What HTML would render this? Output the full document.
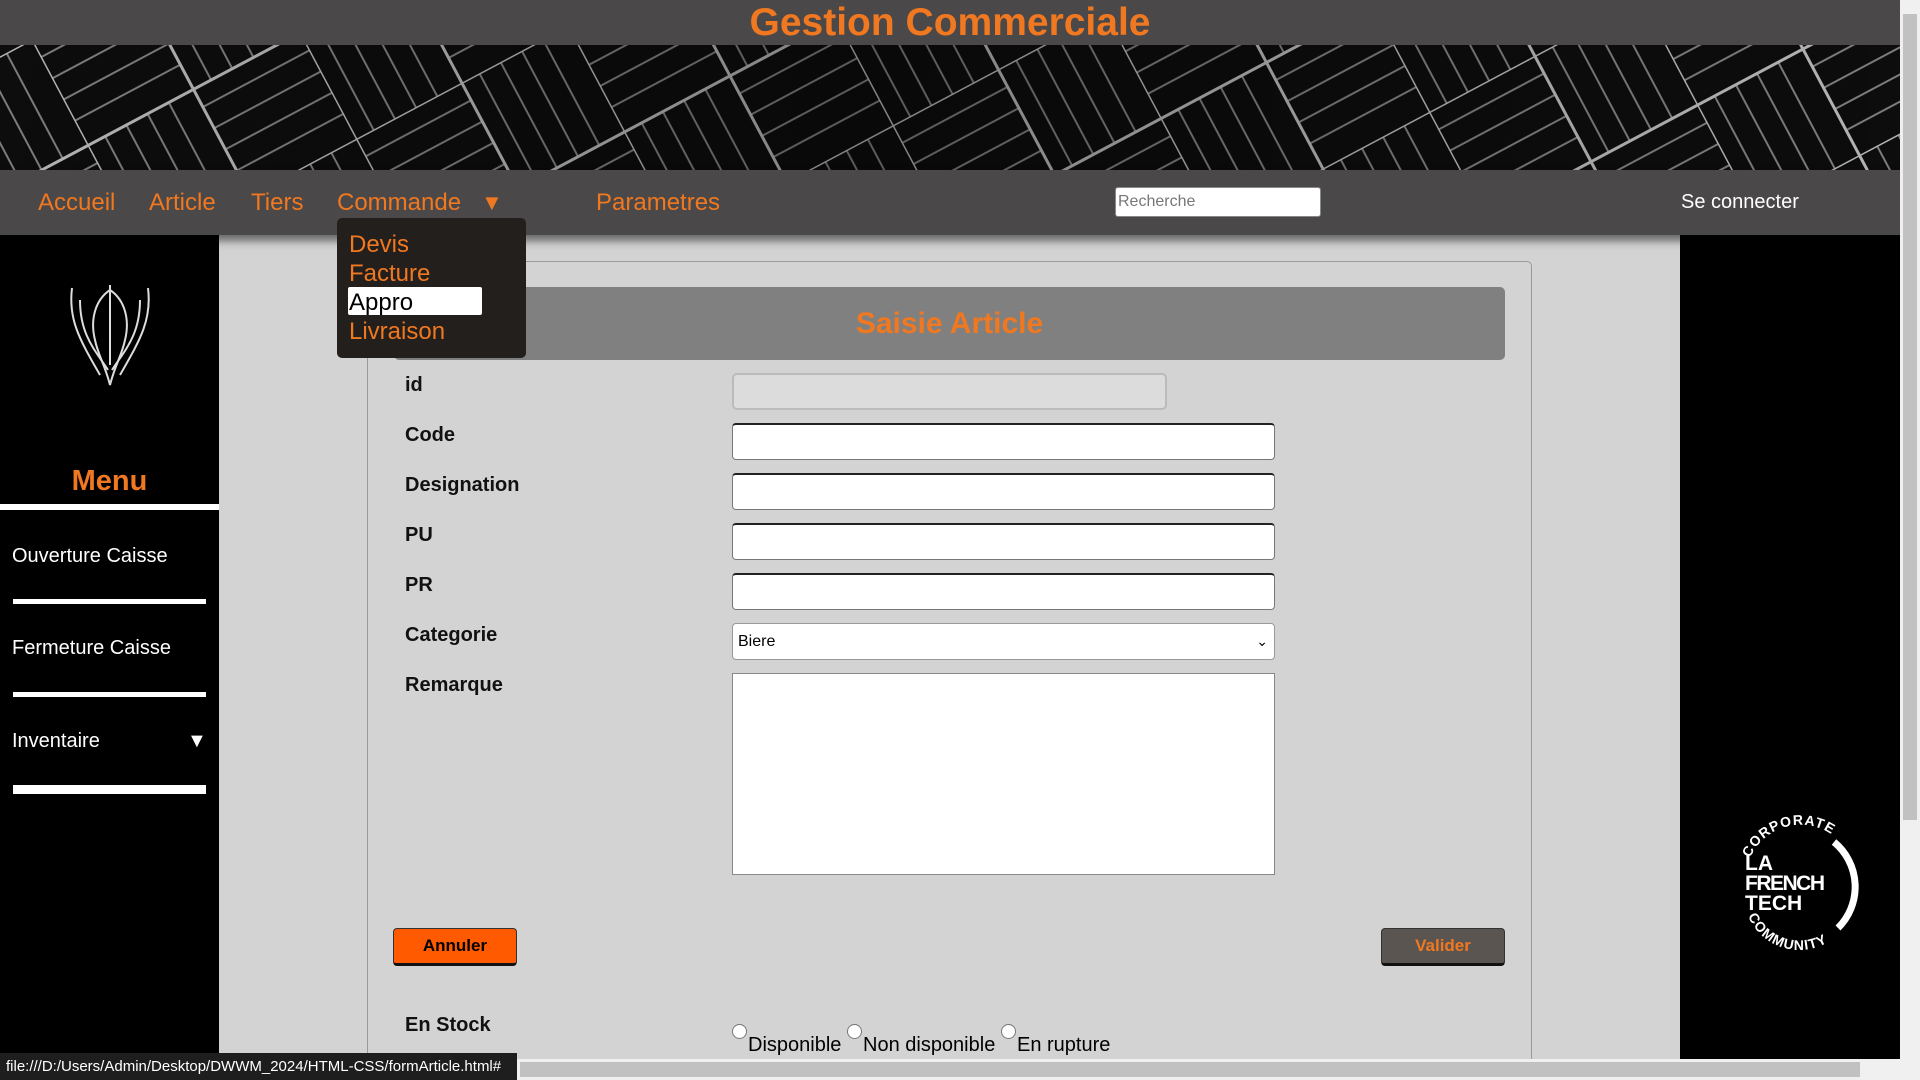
<!DOCTYPE html>
<html><head><meta charset="utf-8"><style>
*{margin:0;padding:0;box-sizing:border-box}
html,body{width:1920px;height:1080px;overflow:hidden}
body{background:#d3d3d3;font-family:"Liberation Sans",Arial,sans-serif;position:relative}
.abs{position:absolute}
#top{left:0;top:0;width:1900px;height:45px;background:#4a4849}
#title{left:0;width:1900px;top:0;text-align:center;color:#f07820;font-weight:bold;font-size:39px;line-height:45px}
#banner{left:0;top:45px;width:1900px;height:125px;background:#0c0c0c;overflow:hidden}
#nav{left:0;top:170px;width:1900px;height:65px;background:#4a4849;box-shadow:0 6px 8px rgba(0,0,0,.5)}
.nv{color:#f07820;font-size:24px;top:189px}
#left{left:0;top:235px;width:219px;height:845px;background:#000}
#right{left:1680px;top:235px;width:220px;height:845px;background:#000}
.side{color:#fff;font-size:20px;left:12px}
.bar{left:13px;width:193px;background:#fff}
.lbl{left:405px;font-weight:bold;font-size:20px;color:#111}
.inp{left:732px;width:543px;height:37px;background:#fff;border:1px solid #777;border-top:2px solid #222;border-radius:4px}
</style></head><body>
<div id="top" class="abs"></div>
<div id="title" class="abs">Gestion Commerciale</div>
<div id="banner" class="abs">
<svg width="1900" height="125">
<defs>
<linearGradient id="fade" x1="0" x2="1"><stop offset="0" stop-color="#000" stop-opacity=".1"/><stop offset=".45" stop-color="#000" stop-opacity=".35"/><stop offset="1" stop-color="#000" stop-opacity=".1"/></linearGradient>
<pattern id="p" width="240" height="240" patternUnits="userSpaceOnUse" patternTransform="rotate(-28) translate(30 10)">
<rect width="240" height="240" fill="#0e0e0e"/>
<g stroke="#8a8a8a" stroke-width="2">
<line x1="0" y1="20" x2="120" y2="20"/><line x1="0" y1="44" x2="120" y2="44"/><line x1="0" y1="68" x2="120" y2="68"/><line x1="0" y1="92" x2="120" y2="92"/>
<line x1="140" y1="0" x2="140" y2="120"/><line x1="164" y1="0" x2="164" y2="120"/><line x1="188" y1="0" x2="188" y2="120"/><line x1="212" y1="0" x2="212" y2="120"/>
<line x1="20" y1="120" x2="20" y2="240"/><line x1="44" y1="120" x2="44" y2="240"/><line x1="68" y1="120" x2="68" y2="240"/><line x1="92" y1="120" x2="92" y2="240"/>
<line x1="120" y1="140" x2="240" y2="140"/><line x1="120" y1="164" x2="240" y2="164"/><line x1="120" y1="188" x2="240" y2="188"/><line x1="120" y1="212" x2="240" y2="212"/>
</g>
<g stroke="#c8c8c8" stroke-width="3"><line x1="0" y1="0" x2="240" y2="0"/><line x1="0" y1="120" x2="240" y2="120"/><line x1="0" y1="0" x2="0" y2="240"/><line x1="120" y1="0" x2="120" y2="240"/></g>
</pattern></defs>
<rect width="1900" height="125" fill="url(#p)"/>
<rect width="1900" height="125" fill="url(#fade)"/>
</svg></div>
<div id="nav" class="abs"></div>
<div class="abs nv" style="left:38px">Accueil</div>
<div class="abs nv" style="left:149px">Article</div>
<div class="abs nv" style="left:251px">Tiers</div>
<div class="abs nv" style="left:337px">Commande</div>
<div class="abs nv" style="left:481px;font-size:22px;top:190px">▼</div>
<div class="abs nv" style="left:596px">Parametres</div>
<div class="abs" style="left:1115px;top:187px;width:206px;height:30px;background:#fff;border:1px solid #888;border-radius:3px;color:#777;font-size:16px;line-height:28px;padding-left:2px">Recherche</div>
<div class="abs" style="left:1681px;top:191px;color:#fff;font-size:20px">Se connecter</div>

<div id="left" class="abs"></div>
<svg class="abs" style="left:60px;top:280px" width="100" height="120" viewBox="0 0 100 120">
<g fill="none" stroke="#ddd" stroke-width="2">
<path d="M50 10 C35 20 30 40 35 60 C38 75 45 85 50 105 C55 85 62 75 65 60 C70 40 65 20 50 10Z"/>
<path d="M50 5 L50 85"/>
<path d="M12 8 C8 40 20 60 40 95"/><path d="M88 8 C92 40 80 60 60 95"/>
<path d="M20 20 C20 55 35 70 48 90"/><path d="M80 20 C80 55 65 70 52 90"/>
</g></svg>
<div class="abs" style="left:0;width:219px;top:465px;text-align:center;color:#f07820;font-weight:bold;font-size:29px">Menu</div>
<div class="abs" style="left:0;top:504px;width:219px;height:6px;background:#fff"></div>
<div class="abs side" style="top:545px">Ouverture Caisse</div>
<div class="abs bar" style="top:599px;height:5px"></div>
<div class="abs side" style="top:637px">Fermeture Caisse</div>
<div class="abs bar" style="top:692px;height:5px"></div>
<div class="abs side" style="top:730px">Inventaire</div>
<div class="abs side" style="top:730px;left:187px">▼</div>
<div class="abs bar" style="top:785px;height:9px"></div>

<div id="right" class="abs"></div>
<svg class="abs" style="left:1730px;top:810px" width="140" height="140" viewBox="0 0 140 140">
<defs><path id="arcT" d="M20 48 A55 55 0 0 1 118 42"/><path id="arcB" d="M18 106 A56 56 0 0 0 118 112"/></defs>
<path d="M104 32 A58 58 0 0 1 108 118" fill="none" stroke="#fff" stroke-width="7"/>
<text font-family="Liberation Sans,sans-serif" font-weight="bold" font-size="14" fill="#fff" letter-spacing="1"><textPath href="#arcT">CORPORATE</textPath></text>
<text font-family="Liberation Sans,sans-serif" font-weight="bold" font-size="14" fill="#fff" letter-spacing="1"><textPath href="#arcB">COMMUNITY</textPath></text>
<text x="15" y="60" font-family="Liberation Sans,sans-serif" font-weight="bold" font-size="21" fill="#fff">LA</text>
<text x="15" y="80" font-family="Liberation Sans,sans-serif" font-weight="bold" font-size="21" fill="#fff" textLength="80">FRENCH</text>
<text x="15" y="100" font-family="Liberation Sans,sans-serif" font-weight="bold" font-size="21" fill="#fff">TECH</text>
</svg>

<div class="abs" style="left:367px;top:261px;width:1165px;height:810px;border:1px solid #999;border-radius:5px"></div>
<div class="abs" style="left:394px;top:287px;width:1111px;height:73px;background:#808080;border-radius:5px"></div>
<div class="abs" style="left:394px;width:1111px;top:307px;text-align:center;color:#f07820;font-weight:bold;font-size:30px">Saisie Article</div>

<div class="abs lbl" style="top:374px">id</div>
<div class="abs lbl" style="top:424px">Code</div>
<div class="abs lbl" style="top:474px">Designation</div>
<div class="abs lbl" style="top:524px">PU</div>
<div class="abs lbl" style="top:574px">PR</div>
<div class="abs lbl" style="top:624px">Categorie</div>
<div class="abs lbl" style="top:674px">Remarque</div>
<div class="abs" style="left:732px;top:373px;width:435px;height:37px;background:#dcdcdc;border:2px solid #bbb;border-radius:5px"></div>
<div class="abs inp" style="top:423px"></div>
<div class="abs inp" style="top:473px"></div>
<div class="abs inp" style="top:523px"></div>
<div class="abs inp" style="top:573px"></div>
<div class="abs" style="left:732px;top:623px;width:543px;height:37px;background:#fff;border:1px solid #999;border-radius:4px;font-size:16px;line-height:35px;padding-left:5px">Biere<span style="position:absolute;right:6px;font-size:14px">&#8964;</span></div>
<div class="abs" style="left:732px;top:673px;width:543px;height:202px;background:#fff;border:1px solid #888"></div>

<div class="abs" style="left:393px;top:928px;width:124px;height:38px;background:#ff5a00;border:1px solid #333;border-bottom:3px solid #111;border-radius:4px;text-align:center;font-weight:bold;font-size:17px;line-height:34px">Annuler</div>
<div class="abs" style="left:1381px;top:928px;width:124px;height:38px;background:#5a5550;border:1px solid #333;border-bottom:3px solid #111;border-radius:4px;text-align:center;font-weight:bold;font-size:17px;line-height:34px;color:#f07820">Valider</div>

<div class="abs lbl" style="top:1014px">En Stock</div>
<div class="abs" style="left:732px;top:1024px;width:15px;height:15px;border:1px solid #777;border-radius:50%;background:#fff"></div>
<div class="abs" style="left:748px;top:1034px;font-size:20px">Disponible</div>
<div class="abs" style="left:847px;top:1024px;width:15px;height:15px;border:1px solid #777;border-radius:50%;background:#fff"></div>
<div class="abs" style="left:863px;top:1034px;font-size:20px">Non disponible</div>
<div class="abs" style="left:1001px;top:1024px;width:15px;height:15px;border:1px solid #777;border-radius:50%;background:#fff"></div>
<div class="abs" style="left:1017px;top:1034px;font-size:20px">En rupture</div>

<div class="abs" style="left:1900px;top:0;width:20px;height:1080px;background:#f0f0f0"></div>
<div class="abs" style="left:1903px;top:14px;width:14px;height:806px;background:#c1c1c1"></div>
<div class="abs" style="left:0;top:1059px;width:1900px;height:21px;background:#f0f0f0"></div>
<div class="abs" style="left:520px;top:1062px;width:1340px;height:15px;background:#c1c1c1"></div>

<div class="abs" style="left:337px;top:218px;width:189px;height:140px;background:#231f1d;border-radius:5px"></div>
<div class="abs" style="left:348px;top:287px;width:134px;height:28px;background:#fff;border-radius:2px"></div>
<div class="abs" style="left:349px;top:230px;font-size:24px;color:#f07820;line-height:29px">Devis<br>Facture<br><span style="color:#000">Appro</span><br>Livraison</div>

<div class="abs" style="left:0;top:1053px;width:517px;height:27px;background:#1e1e1e;color:#fff;font-size:15px;line-height:27px;padding-left:6px">file:///D:/Users/Admin/Desktop/DWWM_2024/HTML-CSS/formArticle.html#</div>
</body></html>
